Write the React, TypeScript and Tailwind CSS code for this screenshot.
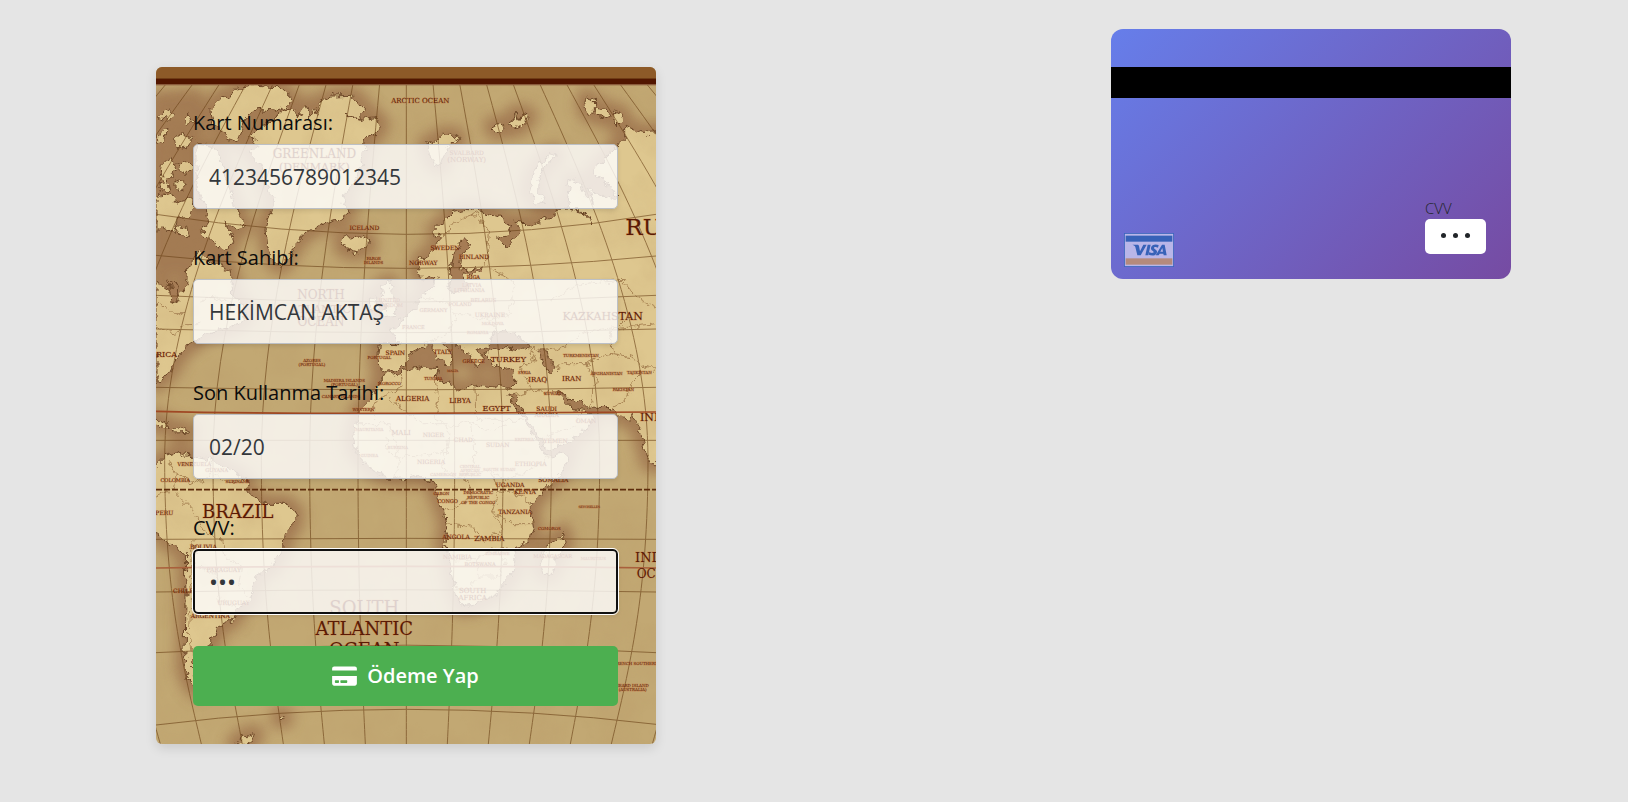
import React, { useState } from "react";
import { FaCreditCard } from "react-icons/fa";

type Label = [text: string, x: number, y: number, size: number];

const LANDS: string[] = [
  // Ellesmere and the northern islands
  "M220 97L240 67L300 55L370 59L405 92L400 117L350 132L300 127L270 152L260 187L245 225L215 217L205 192L170 167L165 127L195 87Z",
  // Greenland
  "M280 212L310 182L350 162L370 137L400 117L425 150L450 112L460 150L475 122L482 145L490 107L530 87L590 85L630 127L610 152L570 142L620 157L660 152L675 172L660 202L620 222L630 242L610 267L620 297L600 337L570 367L560 417L580 432L550 457L500 472L450 497L420 527L400 567L375 599L350 577L335 537L330 487L340 447L355 407L330 347L310 287L280 257L310 237Z",
  // Baffin
  "M120 232L170 237L200 297L220 367L235 417L268 480L240 487L210 467L230 517L215 552L170 527L130 492L160 477L150 427L130 387L120 297Z",
  "M555 522L570 510L620 507L638 522L635 542L600 557L565 547Z",
  // Canadian mainland and the east coast
  "M0 950L40 919L55 889L80 849L110 829L150 799L200 789L250 769L270 749L260 709L230 689L228 639L222 607L170 587L130 547L95 607L92 650L70 690L0 640Z",
  // Arctic archipelago
  "M0 390L40 375L60 405L100 395L120 420L85 460L65 450L55 500L20 480L0 495Z",
  "M20 290L45 275L60 300L35 345L12 330Z",
  "M65 290L95 280L108 300L82 325Z",
  "M8 150L30 130L55 140L40 160Z",
  "M5 200L30 190L25 230L5 232Z",
  "M55 215L78 200L110 215L85 250L60 240Z",
  "M80 160L100 140L110 165L95 180Z",
  "M55 475L92 480L98 510L70 505Z",
  "M10 345L35 340L42 370L15 372Z",
  "M60 340L88 350L80 375L60 365Z",
  // Svalbard and the Barents islands
  "M812 230L840 222L855 205L900 205L908 220L880 232L868 250L855 300L835 290L820 262Z",
  "M1197 257L1172 267L1132 317L1117 377L1142 407L1167 410L1148 380L1150 325L1175 287L1200 270Z",
  "M1008 175L1030 170L1045 180L1030 195L1015 190Z",
  "M1065 170L1080 135L1088 160L1105 140L1118 145L1098 175L1070 187Z",
  "M1290 90L1315 105L1318 130L1300 142L1285 118Z",
  "M1315 120L1350 125L1360 145L1335 155L1315 140Z",
  "M1370 130L1400 142L1402 155L1382 175L1370 155Z",
  // Eurasia and Africa
  "M1520 192L1472 197L1432 187L1412 177L1412 207L1387 232L1377 247L1352 267L1312 317L1342 337L1382 387L1372 397L1332 387L1302 367L1312 407L1292 387L1272 347L1242 337L1232 422L1290 440L1305 475L1270 425L1202 427L1197 447L1152 462L1112 482L1092 462L1077 460L1095 490L1052 542L1022 512L1057 502L1062 477L1032 452L972 432L932 427L892 437L872 457L837 487L850 520L820 560L790 580L785 610L800 640L840 630L832 659L800 680L770 730L740 745L720 780L700 790L735 830L670 829L665 870L670 905L690 918L745 900L760 860L780 850L822 831L840 870L870 890L895 880L880 850L860 831L900 835L940 860L960 900L980 870L960 850L1000 845L1000 830L1010 800L1040 790L1080 800L1120 840L1100 850L1050 842L1000 850L990 870L1010 890L1040 905L1075 900L1072 960L1020 960L960 955L920 970L870 945L840 935L845 905L800 900L732 915L700 920L680 929L665 960L640 1000L610 1030L600 1070L590 1110L595 1150L620 1180L650 1210L690 1230L750 1235L790 1225L820 1245L832 1239L840 1280L862 1329L875 1380L862 1429L880 1480L892 1550L915 1620L950 1615L1022 1580L1075 1510L1077 1470L1070 1450L1122 1420L1132 1380L1122 1319L1172 1259L1222 1209L1240 1160L1172 1169L1142 1120L1100 1050L1052 980L1072 985L1110 1050L1150 1110L1172 1150L1230 1130L1290 1090L1315 1050L1290 1030L1250 1025L1202 974L1232 985L1255 1010L1280 1002L1290 1020L1370 1022L1400 1055L1420 1060L1432 1045L1450 1090L1480 1190L1520 1190Z",
  // British Isles
  "M675 660L700 645L712 680L725 720L715 745L680 750L690 710Z",
  "M640 695L662 690L665 725L642 732Z",
  "M1222 1394L1227 1429L1202 1479L1187 1519L1162 1519L1152 1494L1172 1439L1200 1420Z",
  // South America
  "M-20 1200L0 1199L30 1169L70 1154L110 1169L160 1179L240 1219L270 1239L280 1279L320 1309L390 1309L420 1335L412 1380L385 1400L380 1450L350 1500L300 1530L285 1600L240 1630L230 1660L185 1680L180 1705L160 1715L165 1755L110 1775L120 1870L98 1840L85 1800L88 1720L90 1600L88 1459L40 1430L-20 1380Z",
  // Caribbean
  "M-20 1050L5 1055L40 1075L0 1078Z",
  "M52 1085L80 1082L105 1095L60 1098Z",
  "M70 1155L90 1155L92 1164L72 1165Z",
  "M238 2030L262 2010L298 1998L290 2020L265 2040Z",
  "M370 1946L385 1946L383 1958L371 1957Z",
];

const WATERS: string[] = [
  "M882 640L892 567L917 522L937 522L937 537L917 567L912 610L980 600L975 612L925 622L920 640L940 660L900 680L875 665Z",
  "M35 640L66 655L62 705L48 712L45 675Z",
  "M1148 850L1168 845L1175 865L1195 905L1185 920L1165 895Z",
];

const BORDERS: string[] = [
  "M840 935L850 1000L835 1050L880 1080L940 1060L985 1090L1050 1080M960 955L962 1060L1100 1060M735 915L740 960L650 1010L650 1050M700 1000L800 1070L880 1070L870 1150L800 1170L700 1165L690 1110",
  "M600 1070L700 1070L730 1170L720 1230M870 1150L860 1200L900 1230L1000 1210L1050 1240L1120 1210L1190 1165M940 1060L960 1160L930 1230L950 1290L900 1320L865 1330",
  "M1000 1210L1030 1270L1010 1340L1040 1390L980 1420L950 1380L870 1370M1030 1270L1110 1290L1120 1320M1010 1340L1080 1370L1130 1370M880 1480L960 1475L1010 1440L1075 1450M960 1475L970 1530L930 1570L900 1560M1010 1440L1050 1480L1020 1530L970 1530",
  "M850 520L890 470L930 450L960 440L1000 500L990 600M1000 600L1080 650L1060 740L1000 760L900 740L860 700L800 690M900 740L880 800L800 830M1000 760L1020 790M1120 840L1200 850L1300 790L1500 770M1180 700L1280 650L1400 640L1440 690L1500 720",
  "M1120 840L1140 880L1090 900L1130 970L1210 975M1195 900L1220 890L1290 890L1320 930L1300 1020M1290 890L1370 860L1430 870L1470 900L1430 940L1410 1000L1370 1020M1370 860L1360 800L1400 760M1470 900L1500 910M1130 970L1075 985M1172 1110L1260 1070L1280 1030",
  "M0 1290L50 1270L60 1220L40 1180M60 1220L120 1250L170 1220L160 1180M170 1220L230 1250L260 1240M60 1280L110 1330L150 1400L200 1420L210 1470L260 1500L250 1560L280 1590M110 1420L120 1500L180 1520L190 1600L240 1620M100 1440L108 1560L100 1700L115 1800",
  "M0 780L60 800L85 770L130 770M130 700L180 690L250 720M0 700L50 740L90 740",
];

const LABELS: Label[] = [
  ["ARCTIC OCEAN", 793, 107, 21],
  ["GREENLAND", 475, 272, 36],
  ["(DENMARK)", 475, 312, 33],
  ["ICELAND", 625, 489, 18],
  ["FAROE", 653, 579, 12],
  ["ISLANDS", 653, 591, 12],
  ["SVALBARD", 932, 264, 18],
  ["(NORWAY)", 932, 286, 21],
  ["SWEDEN", 867, 550, 18],
  ["FINLAND", 954, 575, 18],
  ["NORWAY", 802, 595, 18],
  ["RIGA", 952, 637, 15],
  ["NORTH", 495, 697, 36],
  ["ATLANTIC", 495, 737, 33],
  ["OCEAN", 495, 776, 36],
  ["AZORES", 468, 884, 12],
  ["(PORTUGAL)", 468, 896, 12],
  ["SPAIN", 718, 864, 18],
  ["PORTUGAL", 670, 876, 12],
  ["MADEIRA ISLANDS", 565, 944, 12],
  ["(PORTUGAL)", 565, 956, 12],
  ["CANARY ISLANDS", 555, 994, 12],
  ["MOROCCO", 700, 954, 12],
  ["WESTERN", 622, 1031, 12],
  ["ALGERIA", 770, 1002, 21],
  ["LIBYA", 912, 1007, 21],
  ["EGYPT", 1022, 1032, 24],
  ["SAUDI", 1172, 1031, 18],
  ["ARABIA", 1172, 1051, 18],
  ["TUNISIA", 832, 940, 12],
  ["ITALY", 862, 862, 18],
  ["GREECE", 953, 889, 15],
  ["MALTA", 890, 916, 9],
  ["TURKEY", 1057, 884, 24],
  ["SYRIA", 1105, 920, 12],
  ["IRAQ", 1145, 946, 21],
  ["KUWAIT", 1190, 984, 12],
  ["IRAN", 1247, 941, 21],
  ["TURKMENISTAN", 1275, 871, 12],
  ["AFGHANISTAN", 1352, 925, 12],
  ["PAKISTAN", 1402, 972, 12],
  ["TAJIKISTAN", 1450, 922, 12],
  ["KAZKAHSTAN", 1340, 759, 33],
  ["LATVIA", 947, 660, 15],
  ["LITHUANIA", 940, 676, 15],
  ["GERMANY", 832, 734, 15],
  ["POLAND", 912, 718, 15],
  ["BELARUS", 982, 704, 15],
  ["UKRAINE", 1002, 751, 18],
  ["MOLDOVA", 1010, 775, 12],
  ["ROMANIA", 965, 802, 12],
  ["FRANCE", 772, 785, 15],
  ["UNITED", 700, 705, 15],
  ["KINGDOM", 700, 720, 15],
  ["MAURITANIA", 640, 1091, 12],
  ["MALI", 735, 1104, 21],
  ["NIGER", 832, 1111, 18],
  ["CHAD", 922, 1126, 18],
  ["SUDAN", 1025, 1139, 18],
  ["ERITREA", 1105, 1122, 12],
  ["YEMEN", 1199, 1128, 18],
  ["OMAN", 1290, 1067, 18],
  ["ETHIOPIA", 1124, 1198, 18],
  ["NIGERIA", 825, 1190, 18],
  ["GUINEA", 640, 1170, 12],
  ["BURKINA", 725, 1145, 12],
  ["CENTRAL", 942, 1202, 12],
  ["AFRICAN", 942, 1215, 12],
  ["REPUBLIC", 942, 1228, 12],
  ["SOUTH SUDAN", 1030, 1212, 12],
  ["CAMEROON", 862, 1228, 12],
  ["UGANDA", 1062, 1261, 18],
  ["KENYA", 1107, 1281, 18],
  ["SOMALIA", 1192, 1245, 18],
  ["GABON", 856, 1284, 12],
  ["CONGO", 875, 1307, 15],
  ["DEMOCRATIC", 967, 1282, 12],
  ["REPUBLIC", 967, 1295, 12],
  ["OF THE CONGO", 967, 1310, 12],
  ["TANZANIA", 1077, 1341, 18],
  ["SEYCHELLES", 1300, 1323, 9],
  ["VENEZUELA", 115, 1196, 15],
  ["GUYANA", 182, 1216, 15],
  ["COLOMBIA", 58, 1245, 15],
  ["SURINAME", 245, 1248, 12],
  ["BRAZIL", 245, 1352, 54],
  ["PERU", 25, 1345, 18],
  ["BOLIVIA", 142, 1446, 18],
  ["PARAGUAY", 203, 1514, 18],
  ["URUGUAY", 233, 1613, 18],
  ["CHILE", 82, 1578, 18],
  ["ARGENTINA", 163, 1653, 18],
  ["SOUTH", 625, 1642, 54],
  ["ATLANTIC", 625, 1705, 54],
  ["OCEAN", 625, 1768, 54],
  ["ANGOLA", 900, 1417, 18],
  ["ZAMBIA", 1000, 1422, 21],
  ["ZIMBABWE", 1025, 1465, 12],
  ["NAMIBIA", 904, 1477, 18],
  ["BOTSWANA", 972, 1496, 15],
  ["SOUTH", 950, 1579, 21],
  ["AFRICA", 950, 1600, 21],
  ["COMOROS", 1180, 1390, 12],
  ["MADAGASCAR", 1190, 1472, 15],
  ["MAURITIUS", 1312, 1478, 12],
  ["FRENCH SOUTHERN", 1440, 1793, 12],
  ["HEARD ISLAND", 1428, 1860, 12],
  ["(AUSTRALIA)", 1430, 1873, 12],
];

const EDGE_LABELS: Label[] = [
  ["RUSSIA", 1408, 504, 69],
  ["RICA", 0, 871, 24],
  ["INDIA", 1452, 1061, 33],
  ["INDIAN", 1437, 1484, 39],
  ["OCEAN", 1442, 1532, 36],
];

const MERIDIANS = [-13, -12, -11, -10, -9, -8, -7, -6, -5, -4, -3, -2, -1, 0, 1, 2, 3, 4, 5, 6, 7, 8, 9, 10, 11, 12, 13];

const PARALLELS: string[] = [
  "M0 442Q375 500 751 502T1500 442",
  "M0 565Q375 604 751 604T1500 567",
  "M0 685Q751 725 1500 685",
  "M0 786Q751 808 1500 786",
  "M0 961Q751 976 1500 961",
  "M0 1120H1500",
  "M0 1417Q751 1411 1500 1417",
  "M0 1575Q751 1562 1500 1575",
  "M0 1757Q751 1712 1500 1757",
  "M0 1974Q375 1927 751 1927T1500 1972",
];

function WorldMap() {
  return (
    <svg
      aria-hidden="true"
      viewBox="0 0 1500 2031"
      preserveAspectRatio="xMidYMid slice"
      className="absolute inset-0 h-full w-full"
    >
      <defs>
        <filter id="halo" x="-10%" y="-10%" width="120%" height="120%">
          <feGaussianBlur stdDeviation="19" />
        </filter>
        <filter id="coast" filterUnits="userSpaceOnUse" x="-40" y="-40" width="1600" height="2120">
          <feTurbulence type="fractalNoise" baseFrequency="0.045" numOctaves="3" seed="4" result="n" />
          <feDisplacementMap in="SourceGraphic" in2="n" scale="30" xChannelSelector="R" yChannelSelector="G" />
        </filter>
        <filter id="paper" x="0" y="0" width="100%" height="100%">
          <feTurbulence type="fractalNoise" baseFrequency="0.009" numOctaves="4" seed="9" />
          <feColorMatrix values="0 0 0 0 0.45  0 0 0 0 0.28  0 0 0 0 0.12  0.9 0 0 0 -0.33" />
        </filter>
      </defs>
      <rect width="1500" height="2031" fill="#c2a873" />
      <g filter="url(#halo)" fill="#9f7550" stroke="#9f7550" strokeWidth="54" strokeLinejoin="round" opacity="0.88">
        {LANDS.map((d) => (
          <path key={d} d={d} />
        ))}
        <path d="M0 100L120 90L110 580L0 620Z" />
      </g>
      <g filter="url(#coast)" strokeLinejoin="round">
        <g fill="#dec78f" stroke="#6b4526" strokeWidth="3">
          {LANDS.map((d) => (
            <path key={d} d={d} />
          ))}
        </g>
        <g fill="#a67c54" stroke="#6b4526" strokeWidth="3">
          {WATERS.map((d) => (
            <path key={d} d={d} />
          ))}
        </g>
        <g fill="none" stroke="#9b7446" strokeWidth="3" opacity="0.8">
          {BORDERS.map((d) => (
            <path key={d} d={d} />
          ))}
        </g>
      </g>
      <rect width="1500" height="2031" filter="url(#paper)" opacity="0.35" />
      <g fill="none" stroke="#6b4218" strokeWidth="3" opacity="0.62">
        {MERIDIANS.map((k) => (
          <path
            key={k}
            d={`M${751 + 80 * k} 50C${751 + 112 * k} 400 ${751 + 145 * k} 780 ${751 + 145 * k} 1180S${751 + 134 * k} 1800 ${751 + 123 * k} 2031`}
          />
        ))}
        {PARALLELS.map((d) => (
          <path key={d} d={d} />
        ))}
      </g>
      <path d="M0 1268H1500" stroke="#5e2c0c" strokeWidth="5" strokeDasharray="18 6" />
      <path d="M0 1033Q300 1040 751 1039T1500 1035" fill="none" stroke="#a04824" strokeWidth="5" />
      <path d="M0 1503Q751 1493 1500 1503" fill="none" stroke="#a9603c" strokeWidth="5" />
      <g fill="#5a1a04" stroke="#c76a35" strokeOpacity="0.35" strokeWidth="3" paintOrder="stroke" className="font-['DejaVu_Serif',serif]">
        {LABELS.map(([text, x, y, size]) => (
          <text key={`${text}${y}`} x={x} y={y} fontSize={size} textAnchor="middle">
            {text}
          </text>
        ))}
        {EDGE_LABELS.map(([text, x, y, size]) => (
          <text key={`${text}${y}`} x={x} y={y} fontSize={size}>
            {text}
          </text>
        ))}
      </g>
      <rect width="1500" height="34" fill="#8d5a28" />
      <rect y="33" width="1500" height="3" fill="#6f3c16" />
      <rect y="36" width="1500" height="15" fill="#521600" />
      <rect y="51" width="1500" height="4" fill="#8a5b3c" />
    </svg>
  );
}

function VisaMark() {
  return (
    <svg role="img" aria-label="Visa" viewBox="0 0 150 102" className="h-[34px] w-[50px]">
      <rect x="1" y="1" width="148" height="100" fill="#b9b6e8" stroke="#3d66bd" strokeWidth="3" />
      <rect x="5" y="8" width="140" height="18" fill="#3762b8" />
      <rect x="5" y="76" width="140" height="19" fill="#b58a7c" />
      <g fill="#3762b8">
        <path d="M26 35H40C43 35 44 36 45 39L48 55L58 35H68L50 67H40L34 42C33 39 30 37 26 36Z" />
        <path d="M71 35H80L73 67H64Z" />
        <path d="M104 36L102 44C96 41 90 41 90 45C90 49 101 50 99 58C97 69 83 69 74 65L76 57C81 60 88 61 89 57C89 53 79 52 81 44C83 34 95 33 104 36Z" />
        <path fillRule="evenodd" d="M114 35H122L128 67H119L118 62H107L104 67H95ZM115 45L109 56H117Z" />
      </g>
    </svg>
  );
}

interface FieldProps {
  id: string;
  label: string;
  type?: string;
  value: string;
  active?: boolean;
  onChange: (value: string) => void;
}

function Field({ id, label, type = "text", value, active = false, onChange }: FieldProps) {
  const state = active
    ? "border-2 border-[#101010] px-[14px] text-[24px] outline outline-1 outline-white"
    : "border border-[#bcc0c6] px-[15px] text-[21px] outline-none";
  return (
    <div className="flex flex-col gap-1">
      <label htmlFor={id} className="text-[20px] leading-[35px] text-[#0c0c0c]">
        {label}
      </label>
      <input
        id={id}
        type={type}
        value={value}
        onChange={(e) => onChange(e.target.value)}
        className={`h-[65px] w-full rounded-[5px] bg-white/80 text-[#33373b] shadow-[0_2px_4px_rgba(0,0,0,0.1)] ${state}`}
      />
    </div>
  );
}

function CardBack({ cvv }: { cvv: string }) {
  return (
    <section
      aria-label="Kart arka yüzü"
      className="flex h-[250px] w-[400px] shrink-0 flex-col justify-between overflow-hidden rounded-xl bg-[linear-gradient(135deg,#667eea,#764ba2)]"
    >
      <div className="mt-[38px] h-[31px] bg-black" />
      <div className="flex items-end justify-between pr-[25px] pb-3 pl-[13px]">
        <VisaMark />
        <div className="mb-[13px] flex flex-col">
          <span className="text-[15px] leading-[22px] font-light text-[#212529]">CVV</span>
          <span className="flex h-[35px] w-[61px] items-center justify-center gap-[7px] rounded-[5px] bg-white pb-[2px]">
            {cvv.split("").map((_, i) => (
              <span key={i} className="h-[5px] w-[5px] rounded-full bg-[#212529]" />
            ))}
          </span>
        </div>
      </div>
    </section>
  );
}

export default function App() {
  const [number, setNumber] = useState("4123456789012345");
  const [owner, setOwner] = useState("HEKİMCAN AKTAŞ");
  const [expiry, setExpiry] = useState("02/20");
  const [cvv, setCvv] = useState("123");

  return (
    <main className="flex min-h-screen items-start justify-between bg-[#e5e5e5] pr-[117px] pl-[156px] font-['Open_Sans','Noto_Sans',sans-serif]">
      <form
        onSubmit={(e) => e.preventDefault()}
        className="relative mt-[67px] w-[500px] overflow-hidden rounded-[6px] shadow-[0_4px_12px_rgba(0,0,0,0.12)]"
      >
        <WorldMap />
        <div className="relative flex flex-col py-[38px] pr-[38px] pl-[37px]">
          <div className="flex flex-col gap-[31px]">
            <Field id="number" label="Kart Numarası:" value={number} onChange={setNumber} />
            <Field id="owner" label="Kart Sahibi:" value={owner} onChange={setOwner} />
            <Field id="expiry" label="Son Kullanma Tarihi:" value={expiry} onChange={setExpiry} />
            <Field id="cvv" label="CVV:" type="password" value={cvv} active onChange={setCvv} />
          </div>
          <button
            type="submit"
            className="mt-8 flex h-[60px] items-center justify-center gap-[10px] rounded-[5px] bg-[#4caf50] text-[20px] font-semibold text-white"
          >
            <FaCreditCard aria-hidden="true" className="h-[22px] w-[25px]" />
            Ödeme Yap
          </button>
        </div>
      </form>
      <div className="mt-[29px]">
        <CardBack cvv={cvv} />
      </div>
    </main>
  );
}
